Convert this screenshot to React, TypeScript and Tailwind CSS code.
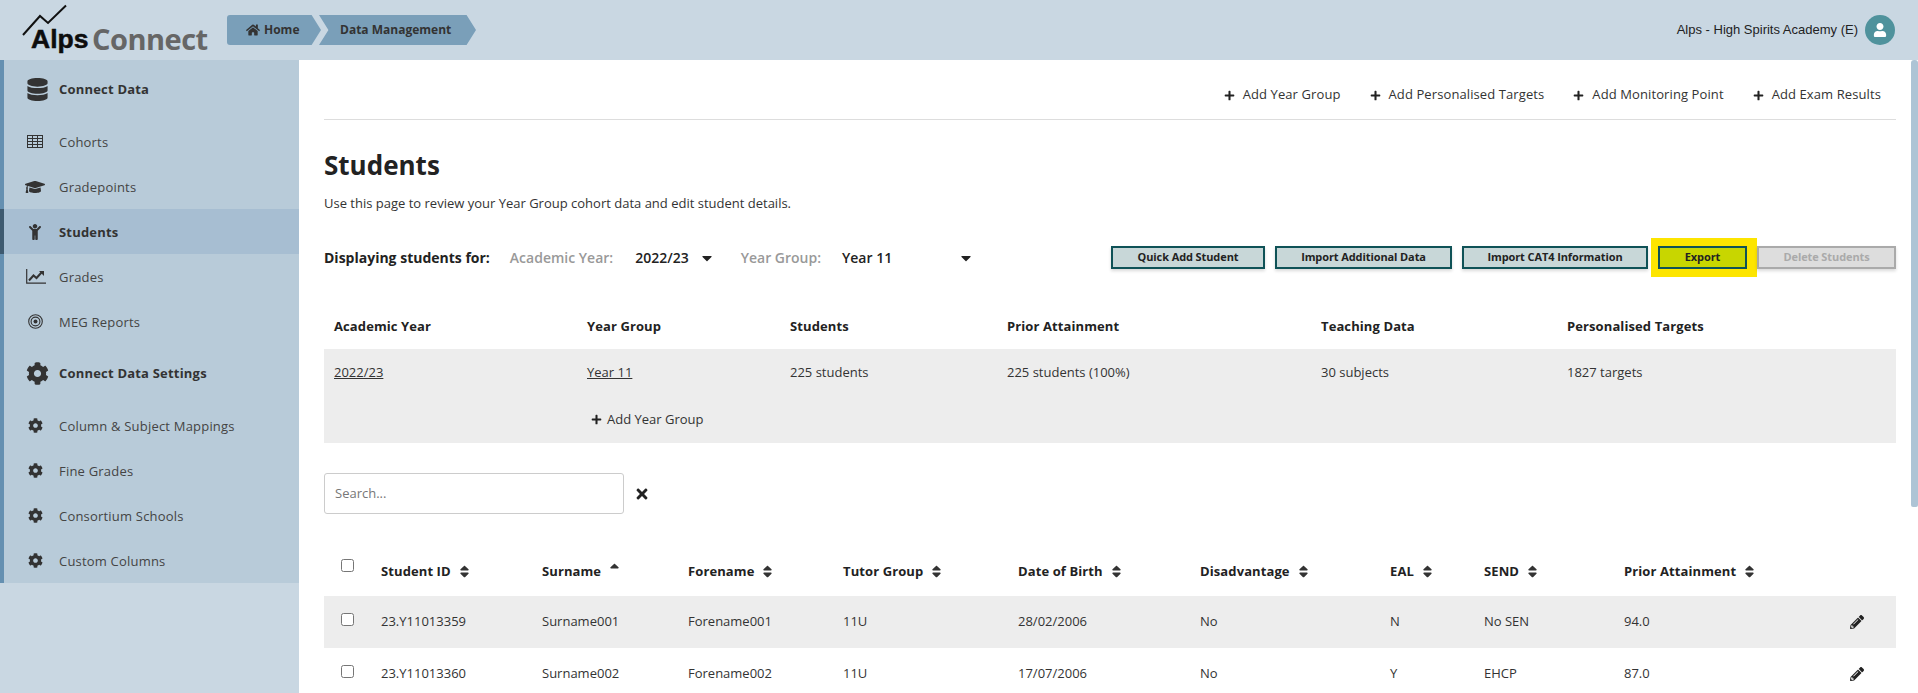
import React from "react";
import {
  FaHome, FaDatabase, FaCog, FaGraduationCap, FaChild,
  FaPlus, FaCaretDown, FaTimes, FaSort, FaSortUp, FaPencilAlt, FaUser,
} from "react-icons/fa";

const GridIcon = () => (
  <svg width="16" height="13" viewBox="0 0 16 13" fill="none" stroke="#333" strokeWidth="1">
    <rect x="0.5" y="0.5" width="15" height="12" />
    <path d="M0.5 3.5H15.5M0.5 6.5H15.5M0.5 9.5H15.5M5.5 0.5V12.5M10.5 0.5V12.5" />
  </svg>
);
const ChartIcon = () => (
  <svg className="ml-[2px]" width="20" height="15" viewBox="0 0 20 15" fill="none" stroke="#333">
    <path d="M0.7 0V14.2H20" strokeWidth="1.2" />
    <path d="M3 11.5L7.5 6.5L10.5 9L15.5 3.5" strokeWidth="2" />
    <path d="M13 2H18V7Z" fill="#333" stroke="none" />
  </svg>
);
const TargetIcon = () => (
  <svg width="15" height="15" viewBox="0 0 15 15" fill="none" stroke="#333">
    <circle cx="7.5" cy="7.5" r="6.8" strokeWidth="1.1" />
    <circle cx="7.5" cy="7.5" r="4.4" strokeWidth="1.1" />
    <circle cx="7.5" cy="7.5" r="2" fill="#333" stroke="none" />
  </svg>
);
const CapIcon = () => <FaGraduationCap className="text-[20px] text-[#333]" />;
const ChildIcon = () => <FaChild className="text-[16px] text-[#333]" />;
const CogIcon = () => <FaCog className="text-[15px] text-[#333]" />;

const navA = [
  { label: "Cohorts", Icon: GridIcon },
  { label: "Gradepoints", Icon: CapIcon },
  { label: "Students", Icon: ChildIcon, active: true },
  { label: "Grades", Icon: ChartIcon },
  { label: "MEG Reports", Icon: TargetIcon },
];
const navB = ["Column & Subject Mappings", "Fine Grades", "Consortium Schools", "Custom Columns"];

function NavItem({ label, Icon, active }: { label: string; Icon: any; active?: boolean }) {
  return (
    <div className={active
      ? "h-[45px] -ml-[4px] border-l-4 border-[#3e5a70] bg-[#a7bed2] flex items-center"
      : "h-[45px] -ml-[4px] border-l-4 border-transparent flex items-center"}>
      <span className="w-[55px] flex justify-center pl-[7px] shrink-0"><Icon /></span>
      <span className={active ? "pt-[2px] font-bold text-[13px] tracking-[0.2px] text-[#333]" : "pt-[2px] text-[13px] tracking-[0.2px] text-[#444]"}>{label}</span>
    </div>
  );
}

function Section({ label, Icon }: { label: string; Icon: any }) {
  return (
    <div className="h-[59px] flex items-center">
      <span className="w-[55px] flex justify-center pl-[11px] shrink-0"><Icon className="text-[23px] text-[#333]" /></span>
      <span className="font-bold text-[13px] tracking-[0.2px] text-[#333]">{label}</span>
    </div>
  );
}

function TopLink({ label }: { label: string }) {
  return (
    <span className="flex items-center gap-[8px] text-[13px] tracking-[0.1px] text-[#333]">
      <FaPlus className="text-[11px] text-[#222]" />
      {label}
    </span>
  );
}

function Btn({ label }: { label: string }) {
  return (
    <button className="h-[23px] border-2 border-[#0f5257] bg-[#c8d7d8] text-[11px] tracking-[-0.1px] font-bold text-[#222] shadow-[0_2px_3px_rgba(0,0,0,0.15)] flex items-center justify-center">
      {label}
    </button>
  );
}

const studentCols = "grid grid-cols-[57px_161px_146px_155px_175px_182px_190px_94px_140px_226px_1fr] items-center";
const summaryCols = "grid grid-cols-[253px_203px_217px_314px_246px_1fr] pl-[10px]";

function Head({ label, up }: { label: string; up?: boolean }) {
  return (
    <div className="flex items-center gap-[6px] font-bold text-[13px] text-[#222] tracking-[0.1px]">
      {label}
      {up ? <FaSortUp className="text-[15px] text-[#333] -mt-[5px]" /> : <FaSort className="text-[15px] text-[#333]" />}
    </div>
  );
}

const rows = [
  ["23.Y11013359", "Surname001", "Forename001", "11U", "28/02/2006", "No", "N", "No SEN", "94.0"],
  ["23.Y11013360", "Surname002", "Forename002", "11U", "17/07/2006", "No", "Y", "EHCP", "87.0"],
];

const Check = () => <span className="block w-[13px] h-[13px] ml-[17px] border border-[#767676] rounded-[2.5px] bg-white" />;

export default function App() {
  return (
    <div className="h-[693px] overflow-hidden flex flex-col bg-[#c9d7e2] font-['Open_Sans',sans-serif]">
      <header className="h-[60px] shrink-0 flex items-center pr-[23px]">
        <div className="relative w-[227px] h-[60px] shrink-0">
          <svg className="absolute left-[22px] top-[4px]" width="46" height="33" viewBox="0 0 46 33">
            <path d="M1 31 L18 12 L26 19 L44 1.5" fill="none" stroke="#111" strokeWidth="2" />
          </svg>
          <span className="absolute left-[31px] top-[19px] text-[26.5px] leading-[40px] font-bold text-[#0d0d0d] font-['Liberation_Sans',sans-serif] [-webkit-text-stroke:0.5px_#0d0d0d]">Alps</span>
          <span className="absolute left-[92px] top-[19px] text-[29px] leading-[40px] font-bold text-[#666] font-['Open_Sans',sans-serif] tracking-[-0.5px]">Connect</span>
        </div>
        <nav className="flex items-center text-[12px] font-bold text-[#333]">
          <div className="h-[30px] w-[94px] bg-[#7a9fb9] rounded-l-[3px] [clip-path:polygon(0_0,90%_0,100%_50%,90%_100%,0_100%)] flex items-center gap-[4px] pl-[19px]">
            <FaHome className="text-[14px]" /> Home
          </div>
          <div className="h-[30px] w-[157px] -ml-[2px] bg-[#7a9fb9] [clip-path:polygon(0_0,94%_0,100%_50%,94%_100%,0_100%,6%_50%)] flex items-center pl-[21px]">
            Data Management
          </div>
        </nav>
        <div className="ml-auto flex items-center gap-[7px]">
          <span className="text-[13px] text-[#222] font-['Liberation_Sans',sans-serif]">Alps - High Spirits Academy (E)</span>
          <span className="w-[30px] h-[30px] rounded-full bg-[#4f929c] flex items-center justify-center">
            <FaUser className="text-[14px] text-white" />
          </span>
        </div>
      </header>

      <div className="flex flex-1 min-h-0">
        <aside className="w-[299px] shrink-0 self-start h-[523px] bg-[#b8cbd9] border-l-4 border-[#6590b1]">
          <Section label="Connect Data" Icon={FaDatabase} />
          {navA.map((n) => <NavItem key={n.label} {...n} />)}
          <Section label="Connect Data Settings" Icon={FaCog} />
          {navB.map((l) => <NavItem key={l} label={l} Icon={CogIcon} />)}
        </aside>

        <main className="flex-1 min-w-0 bg-white pl-[25px] pr-[15px] text-[13px] text-[#333]">
          <div className="h-[60px] border-b border-[#ddd] flex justify-end items-center gap-[29px] pr-[15px] pt-[11px]">
            <TopLink label="Add Year Group" />
            <TopLink label="Add Personalised Targets" />
            <TopLink label="Add Monitoring Point" />
            <TopLink label="Add Exam Results" />
          </div>
          <h1 className="mt-[27px] text-[26px] leading-[36px] font-bold text-[#222]">Students</h1>
          <p className="mt-[11px] leading-[18px]">Use this page to review your Year Group cohort data and edit student details.</p>

          <div className="mt-[26px] h-[39px] flex items-center text-[14px] font-semibold">
            <span className="font-bold text-[#222]">Displaying students for:</span>
            <span className="ml-[20px] text-[#999]">Academic Year:</span>
            <span className="ml-[22px] text-[#222]">2022/23</span>
            <FaCaretDown className="ml-[10px] text-[16px] text-[#222]" />
            <span className="ml-[26px] text-[#999]">Year Group:</span>
            <span className="ml-[21px] text-[#222]">Year 11</span>
            <FaCaretDown className="ml-[66px] text-[16px] text-[#222]" />
            <div className="ml-auto flex items-center">
              <div className="w-[154px] grid"><Btn label="Quick Add Student" /></div>
              <div className="w-[177px] ml-[10px] grid"><Btn label="Import Additional Data" /></div>
              <div className="w-[186px] ml-[10px] grid"><Btn label="Import CAT4 Information" /></div>
              <div className="ml-[3px] w-[106px] h-[39px] bg-[#fde500] pl-[7px] pr-[10px] flex items-center">
                <button className="h-[23px] w-full border-2 border-[#0f5257] bg-[#c8d600] text-[11px] tracking-[-0.1px] font-bold text-[#222]">Export</button>
              </div>
              <button className="h-[23px] w-[139px] border-2 border-[#aaa] bg-[#ddd] text-[11px] tracking-[-0.1px] font-bold text-[#aaa] shadow-[0_2px_3px_rgba(0,0,0,0.15)]">Delete Students</button>
            </div>
          </div>

          <div className={`${summaryCols} mt-[28px] h-[44px] items-center font-bold text-[#222] tracking-[0.1px]`}>
            <span>Academic Year</span><span>Year Group</span><span>Students</span><span>Prior Attainment</span><span>Teaching Data</span><span>Personalised Targets</span>
          </div>
          <div className="bg-[#ededed] h-[94px]">
            <div className={`${summaryCols} h-[47px] items-center`}>
              <span className="underline">2022/23</span><span className="underline">Year 11</span><span>225 students</span><span>225 students (100%)</span><span>30 subjects</span><span>1827 targets</span>
            </div>
            <div className={`${summaryCols} h-[47px] items-center`}>
              <span />
              <span className="flex items-center gap-[5px] pl-[4px]"><FaPlus className="text-[11px] text-[#222]" />Add Year Group</span>
            </div>
          </div>

          <div className="mt-[30px] flex items-center">
            <div className="w-[300px] h-[41px] border border-[#ccc] rounded-[3px] flex items-center pl-[10px] text-[#777]">Search...</div>
            <FaTimes className="ml-[10px] text-[16px] text-[#222]" />
          </div>

          <div className={`${studentCols} mt-[33px] h-[49px]`}>
            <div className="-mt-[12px]"><Check /></div>
            <Head label="Student ID" />
            <Head label="Surname" up />
            <Head label="Forename" />
            <Head label="Tutor Group" />
            <Head label="Date of Birth" />
            <Head label="Disadvantage" />
            <Head label="EAL" />
            <Head label="SEND" />
            <Head label="Prior Attainment" />
            <span />
          </div>
          {rows.map((r, i) => (
            <div key={r[0]} className={`${studentCols} h-[52px] ${i === 0 ? "bg-[#ededed]" : "bg-white"}`}>
              <div className="-mt-[5px]"><Check /></div>
              {r.map((c, j) => <span key={j}>{c}</span>)}
              <FaPencilAlt className="text-[14px] text-[#222]" />
            </div>
          ))}
        </main>

        <div className="w-[7px] shrink-0 bg-white">
          <div className="h-[447px] bg-[#aec4d5] rounded-t-[3px] rounded-b-[2px]" />
        </div>
      </div>
    </div>
  );
}
